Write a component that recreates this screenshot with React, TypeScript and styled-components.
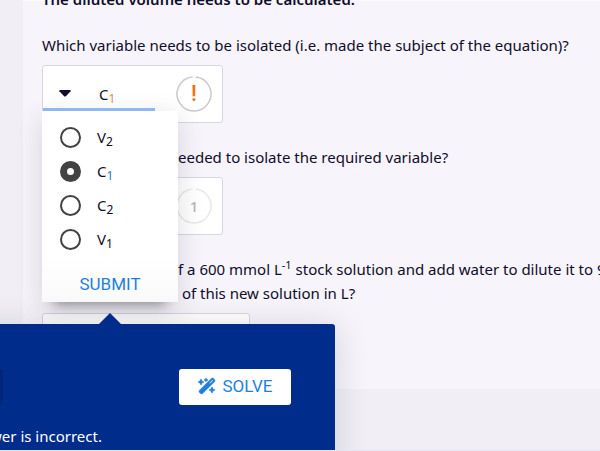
import React from 'react';
import styled, { createGlobalStyle } from 'styled-components';
import { FaWandMagicSparkles } from 'react-icons/fa6';

const GlobalStyle = createGlobalStyle`
  *, *::before, *::after { box-sizing: border-box; }
  body {
    margin: 0;
    color: #0f0d2a;
    font: 15px/24px "Noto Sans", "Open Sans", sans-serif;
  }
  button { font: inherit; color: inherit; cursor: pointer; }
`;

const Page = styled.main`
  height: 100vh;
  padding-left: 23px;
  overflow: hidden;
  background: #f1eff5;
  border-bottom: 1px solid #e3e5f0;
`;

const Card = styled.article`
  display: flow-root;
  padding: 0 0 18px 19px;
  background: #f7f4fb;
  box-shadow: inset 0 1px #fcfbfe;
`;

const Content = styled.div`
  display: flex;
  flex-direction: column;
  gap: 22px;
  margin-top: -13px;
`;

const Note = styled.p`
  margin: 0;
  font-weight: 600;
`;

const Question = styled.section`
  display: flex;
  flex-direction: column;
  align-items: flex-start;
  gap: 8px;
`;

const Prompt = styled.p`
  margin: 0;
  white-space: nowrap;
`;

const Lead = styled.span`
  display: inline-block;
  width: 136px;
  text-align: right;
  white-space: pre;
`;

const Sup = styled.sup`
  font-size: 11px;
  line-height: 0;
  vertical-align: 6px;
`;

const Sub = styled.sub<{ $color?: string }>`
  color: ${(p) => p.$color ?? 'inherit'};
  font-size: 12px;
  line-height: 0;
  vertical-align: -3px;
`;

const AnswerBox = styled.div<{ $wide?: boolean }>`
  display: flex;
  justify-content: space-between;
  width: ${(p) => (p.$wide ? '208px' : '181px')};
  height: 58px;
  padding-right: 10px;
  background: #fff;
  border: 1px solid #d9d6e2;
  border-radius: 3px;
`;

const Field = styled.div`
  position: relative;
  width: 112px;
  height: 45px;
`;

const Picker = styled.button`
  position: relative;
  z-index: 2;
  display: flex;
  align-items: center;
  gap: 28px;
  width: 100%;
  height: 100%;
  padding: 13px 0 0 16px;
  background: none;
  border: 0;
  border-bottom: 3px solid #8fb6f5;
`;

const Menu = styled.form`
  position: absolute;
  z-index: 1;
  top: 100%;
  left: -1px;
  width: 136px;
  padding-top: 9px;
  background: #fff;
  box-shadow:
    0 14px 12px -12px rgba(0, 0, 0, 0.4),
    0 10px 28px 2px rgba(20, 10, 40, 0.07),
    0 4px 26px 3px rgba(20, 10, 40, 0.05);
`;

const Options = styled.fieldset`
  margin: 0;
  padding: 0;
  border: 0;
`;

const Option = styled.label`
  display: flex;
  align-items: center;
  gap: 16px;
  height: 34px;
  padding-left: 18px;
`;

const Radio = styled.input`
  appearance: none;
  width: 21px;
  height: 21px;
  margin: 0;
  background: #fff;
  border: 2px solid #424242;
  border-radius: 50%;

  &:checked { border-width: 7px; }
`;

const Submit = styled.button`
  display: block;
  width: 100%;
  height: 46px;
  padding: 10px 0 0;
  background: linear-gradient(#fff, #fafafa);
  border: 0;
  color: #1f7fe0;
  font: 17px/24px Roboto, sans-serif;
`;

const Ring = styled.svg`
  display: block;
  grid-area: 1 / 1;
`;

const StatusBadge = styled.div<{ $muted?: boolean }>`
  display: grid;
  place-items: center;
  align-self: center;
  color: ${(p) => (p.$muted ? '#b5b5b9' : '#f96a07')};
  font: ${(p) => (p.$muted ? '500 15px/24px "Noto Sans"' : '500 22px/24px Roboto')}, sans-serif;

  span { grid-area: 1 / 1; }
`;

const Feedback = styled.aside`
  position: absolute;
  z-index: 3;
  top: calc(100% + 22px);
  left: 50%;
  display: flex;
  flex-direction: column;
  gap: 19px;
  width: 450px;
  padding: 45px 44px;
  transform: translateX(-50%);
  background: #002c8c;
  border-radius: 3px;
  box-shadow: 0 4px 32px 4px rgba(20, 10, 40, 0.12);
  color: #fff;

  &::before {
    content: '';
    position: absolute;
    bottom: 100%;
    left: 50%;
    border: 11px solid transparent;
    border-top-width: 0;
    border-bottom-color: #002c8c;
    transform: translateX(-50%);
  }
`;

const Actions = styled.div`
  display: flex;
  justify-content: space-between;
`;

const ActionButton = styled.button<{ $primary?: boolean }>`
  display: flex;
  align-items: center;
  justify-content: center;
  gap: 7px;
  width: ${(p) => (p.$primary ? '112px' : '74px')};
  height: 36px;
  padding: 0 0 2px;
  background: ${(p) => (p.$primary ? '#fff' : '#00267a')};
  border: 0;
  border-radius: 3px;
  color: ${(p) => (p.$primary ? '#1f7fe0' : '#fff')};
  font: 17px/24px Roboto, sans-serif;
`;

const WandIcon = styled(FaWandMagicSparkles)`
  stroke: currentColor;
  stroke-width: 16px;
  overflow: visible;
`;

const Message = styled.p`
  margin: 0;
`;

function Status({ children, muted }: { children: string; muted?: boolean }) {
  return (
    <StatusBadge $muted={muted}>
      <Ring width="36" height="36" viewBox="0 0 36 36" fill="none" aria-hidden="true">
        <path
          d="M19.5 1.1A17 17 0 1 1 16.5 1.1"
          stroke={muted ? '#e9e9eb' : '#cbcbce'}
          strokeWidth="1.5"
        />
      </Ring>
      <span>{children}</span>
    </StatusBadge>
  );
}

const choices = [
  { letter: 'V', index: '2' },
  { letter: 'C', index: '1', tint: '#2479bd' },
  { letter: 'C', index: '2' },
  { letter: 'V', index: '1' },
];

export default function App() {
  const [selected, setSelected] = React.useState(1);
  const current = choices[selected];

  return (
    <>
      <GlobalStyle />
      <Page>
        <Card>
          <Content>
            <Note>The diluted volume needs to be calculated.</Note>

            <Question>
              <Prompt>
                Which variable needs to be isolated (i.e. made the subject of the equation)?
              </Prompt>
              <AnswerBox>
                <Field>
                  <Picker type="button" aria-haspopup="true" aria-expanded="true" aria-label="Variable">
                    <svg width="12" height="7" viewBox="0 0 12 7" aria-hidden="true">
                      <path d="M1.2 0h9.6q1.2 0 .8 1.2L6.9 6.2Q6 7 5.1 6.2L.4 1.2Q0 0 1.2 0z" fill="#0f0d2a" />
                    </svg>
                    <span>
                      {current.letter}
                      <Sub $color="#e2903f">{current.index}</Sub>
                    </span>
                  </Picker>
                  <Menu onSubmit={(e) => e.preventDefault()}>
                    <Options aria-label="Variable">
                      {choices.map((c, i) => (
                        <Option key={c.letter + c.index}>
                          <Radio
                            type="radio"
                            name="variable"
                            checked={i === selected}
                            onChange={() => setSelected(i)}
                          />
                          <span>
                            {c.letter}
                            <Sub $color={c.tint}>{c.index}</Sub>
                          </span>
                        </Option>
                      ))}
                    </Options>
                    <Submit type="submit">SUBMIT</Submit>
                    <Feedback role="status">
                      <Actions>
                        <ActionButton type="button">HINT</ActionButton>
                        <ActionButton type="button" $primary>
                          <WandIcon size={18} aria-hidden="true" />
                          SOLVE
                        </ActionButton>
                      </Actions>
                      <Message>Your answer is incorrect.</Message>
                    </Feedback>
                  </Menu>
                </Field>
                <Status>!</Status>
              </AnswerBox>
            </Question>

            <Question>
              <Prompt>
                <Lead>Which step is n</Lead>eeded to isolate the required variable?
              </Prompt>
              <AnswerBox>
                <span />
                <Status muted>1</Status>
              </AnswerBox>
            </Question>

            <Question>
              <Prompt>
                <Lead>You take 90 mL o</Lead>f a 600 mmol L<Sup>-1</Sup> stock solution and add water to
                dilute it to 900 mL.
                <br />
                <Lead>Find the volume</Lead> of this new solution in L?
              </Prompt>
              <AnswerBox $wide />
            </Question>
          </Content>
        </Card>
      </Page>
    </>
  );
}
